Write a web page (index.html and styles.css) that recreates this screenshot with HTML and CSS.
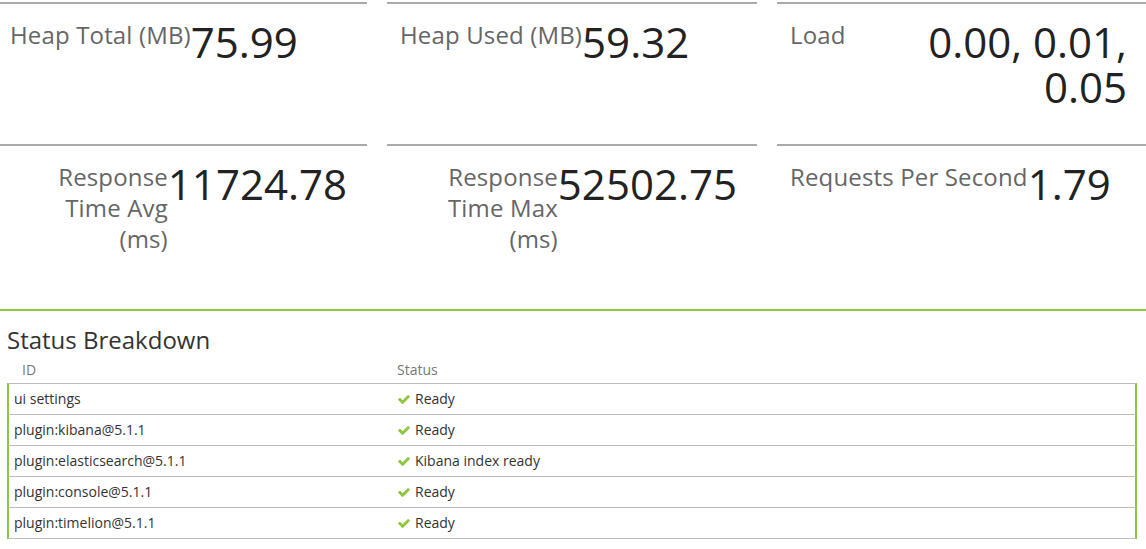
FILE: index.html
```html
<!DOCTYPE html>
<html lang="en">

<head>
    <meta charset="UTF-8">
    <meta name="viewport" content="width=device-width, initial-scale=1.0">
    <title>Status</title>
    <link rel="stylesheet" href="styles.css">
</head>

<body>
    <div class="metrics">
        <div class="metric">
            <div class="metric-name">Heap Total (MB)</div>
            <div class="metric-value">75.99</div>
        </div>
        <div class="metric">
            <div class="metric-name">Heap Used (MB)</div>
            <div class="metric-value">59.32</div>
        </div>
        <div class="metric">
            <div class="metric-name">Load</div>
            <div class="metric-value">0.00, 0.01, 0.05</div>
        </div>
        <div class="metric">
            <div class="metric-name narrow">Response Time Avg (ms)</div>
            <div class="metric-value">11724.78</div>
        </div>
        <div class="metric">
            <div class="metric-name narrow">Response Time Max (ms)</div>
            <div class="metric-value">52502.75</div>
        </div>
        <div class="metric">
            <div class="metric-name">Requests Per Second</div>
            <div class="metric-value">1.79</div>
        </div>
    </div>

    <div class="statuses">
        <h2 class="statuses-title">Status Breakdown</h2>
        <table class="status-table">
            <thead>
                <tr>
                    <th class="col-id">ID</th>
                    <th>Status</th>
                </tr>
            </thead>
            <tbody>
                <tr>
                    <td>ui settings</td>
                    <td><svg class="check" viewBox="121 334 1550 1188"><path d="M1671 566q0 40-28 68l-724 724-136 136q-28 28-68 28t-68-28l-136-136-362-362q-28-28-28-68t28-68l136-136q28-28 68-28t68 28l294 295 656-657q28-28 68-28t68 28l136 136q28 28 28 68z"/></svg>Ready</td>
                </tr>
                <tr>
                    <td>plugin:kibana@5.1.1</td>
                    <td><svg class="check" viewBox="121 334 1550 1188"><path d="M1671 566q0 40-28 68l-724 724-136 136q-28 28-68 28t-68-28l-136-136-362-362q-28-28-28-68t28-68l136-136q28-28 68-28t68 28l294 295 656-657q28-28 68-28t68 28l136 136q28 28 28 68z"/></svg>Ready</td>
                </tr>
                <tr>
                    <td>plugin:elasticsearch@5.1.1</td>
                    <td><svg class="check" viewBox="121 334 1550 1188"><path d="M1671 566q0 40-28 68l-724 724-136 136q-28 28-68 28t-68-28l-136-136-362-362q-28-28-28-68t28-68l136-136q28-28 68-28t68 28l294 295 656-657q28-28 68-28t68 28l136 136q28 28 28 68z"/></svg>Kibana index ready</td>
                </tr>
                <tr>
                    <td>plugin:console@5.1.1</td>
                    <td><svg class="check" viewBox="121 334 1550 1188"><path d="M1671 566q0 40-28 68l-724 724-136 136q-28 28-68 28t-68-28l-136-136-362-362q-28-28-28-68t28-68l136-136q28-28 68-28t68 28l294 295 656-657q28-28 68-28t68 28l136 136q28 28 28 68z"/></svg>Ready</td>
                </tr>
                <tr>
                    <td>plugin:timelion@5.1.1</td>
                    <td><svg class="check" viewBox="121 334 1550 1188"><path d="M1671 566q0 40-28 68l-724 724-136 136q-28 28-68 28t-68-28l-136-136-362-362q-28-28-28-68t28-68l136-136q28-28 68-28t68 28l294 295 656-657q28-28 68-28t68 28l136 136q28 28 28 68z"/></svg>Ready</td>
                </tr>
            </tbody>
        </table>
    </div>
</body>

</html>
```

FILE: styles.css
```css
* {
    box-sizing: border-box;
}

body {
    margin: 0;
    padding: 0;
    overflow: hidden;
    background: #fff;
    font-family: "Open Sans", "Liberation Sans", sans-serif;
    color: #333;
}

.metrics {
    display: grid;
    grid-template-columns: repeat(3, 1fr);
    column-gap: 20px;
    row-gap: 20px;
    margin: 2px -1px 40px -3px;
}

.metric {
    display: flex;
    align-items: flex-start;
    border-top: 2px solid #aaa;
    padding: 15px 20px 15px 13px;
}

.metric-name {
    font-size: 24px;
    line-height: 31px;
    letter-spacing: 0.15px;
    color: #666;
    text-align: right;
}

/* long labels stack next to the number */
.metric-name.narrow {
    max-width: 150px;
    margin-left: auto;
}

.metric-value {
    font-size: 42px;
    line-height: 45px;
    color: #222;
    text-align: right;
}

.statuses {
    border-top: 2px solid #8dc63f;
    padding: 16px 9px 0 7px;
}

.statuses-title {
    margin: 0 0 7px;
    font-size: 24px;
    line-height: 26px;
    font-weight: normal;
    color: #333;
}

.status-table {
    width: 100%;
    border-collapse: separate;
    border-spacing: 0;
    font-size: 14px;
    line-height: 20px;
}

.status-table th {
    text-align: left;
    font-weight: normal;
    color: #777;
    padding: 0 5px 3px 4px;
}

.status-table th.col-id {
    width: 386px;
    padding-left: 15px;
}

.status-table td {
    padding: 5px;
    border-bottom: 1px solid #bbb;
    color: #333;
}

.status-table tbody tr:first-child td {
    border-top: 1px solid #bbb;
}

.status-table td:first-child {
    border-left: 2px solid #8dc63f;
}

.status-table td:last-child {
    border-right: 2px solid #8dc63f;
}

.check {
    width: 12px;
    height: 9px;
    margin-right: 5px;
    fill: #8dc63f;
}
```
